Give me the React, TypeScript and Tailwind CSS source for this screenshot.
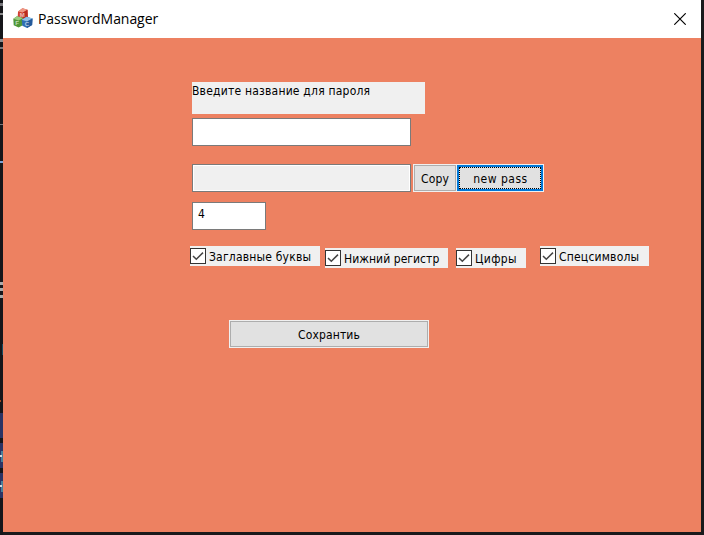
import type { ReactNode } from "react";

const FONT = "font-['DejaVu_Sans_Condensed','DejaVu_Sans',sans-serif] [font-stretch:condensed]";

function AppIcon() {
  return (
    <svg width="20" height="20" viewBox="0 0 20 20" className="mt-[2px] shrink-0">
      <path d="M5 3.500 9.500.3l5 1.400.3 7.300-4.500 2.500L4.700 9.500z" fill="#d2402f" />
      <path d="M5 3.500 9.500.3l5 1.400-4.500 2.900z" fill="#ee9885" />
      <path d="M10 4.600 14.500 1.700l.3 7.300-4.500 2.500z" fill="#b92b20" />
      <path d="M.3 10.800 4 8.300l6 1.700-.3 7.300L5.700 19.500l-5-2.200z" fill="#4e9636" />
      <path d="M.3 10.800 4 8.300l6 1.700-4.300 2.400z" fill="#9acb80" />
      <path d="M8.800 11.800 13.500 8.700l6 1.800-.4 6.500-5 3-4.800-2.200z" fill="#2f6eb2" />
      <path d="M8.800 11.800 13.500 8.700l6 1.800-5.300 2.900z" fill="#8fc0e6" />
      <path d="M14.200 13.400 19.500 10.500l-.4 6.500-5 3z" fill="#245a9b" />
      <g fill="#fff" fontFamily="Liberation Sans, sans-serif" fontWeight="700" opacity=".65">
        <text x="6.800" y="8.700" fontSize="6">M</text>
        <text x="2.200" y="17.300" fontSize="6">F</text>
        <text x="11.800" y="17.800" fontSize="6">C</text>
      </g>
    </svg>
  );
}

function Check({ className, textClass, children }: { className: string; textClass: string; children: ReactNode }) {
  return (
    <label className={`flex h-5 shrink-0 bg-[#f0f0f0] ${className}`}>
      <span className="mt-[2px] flex h-4 w-4 shrink-0 items-center justify-center border border-[#333] bg-white">
        <svg width="14" height="14" viewBox="0 0 14 14" className="shrink-0" fill="none" stroke="#444" strokeWidth="1.500">
          <path d="m2 7 3.300 3.300L12 3.600" />
        </svg>
      </span>
      <span className={`ml-[3px] mt-[3px] whitespace-nowrap leading-4 ${textClass}`}>{children}</span>
    </label>
  );
}

export default function App() {
  return (
    <div className={`flex h-[535px] w-[704px] overflow-hidden bg-[#1a1a1c] text-[12px] text-black ${FONT}`}>
      <div className="flex w-[3px] shrink-0 flex-col bg-[#15161a]">
        <div className="mt-[3px] h-[3px] bg-[#77777c]" />
        <div className="mt-[7px] h-[2px] bg-[#8c8c8e]" />
        <div className="mt-[24px] h-[3px] bg-[#8c8c8e]" />
        <div className="mt-[5px] h-[2px] bg-[#77777c]" />
        <div className="mt-[75px] h-[1px] bg-[#77777c]" />
        <div className="mt-[36px] h-[2px] bg-[#7ba2d5]" />
        <div className="mt-[119px] h-[3px] bg-[#aaaaaa]" />
        <div className="mt-[3px] h-[3px] bg-[#aaaaaa]" />
        <div className="mt-[4px] h-[3px] bg-[#aaaaaa]" />
        <div className="ml-[2px] mt-[46px] h-[11px] bg-[#164b61]" />
        <div className="mt-[45px] h-[2px] w-[1px] bg-[#a04820]" />
        <div className="mt-[11px] h-[25px] bg-[#293464]" />
        <div className="mt-[5px] h-[25px] bg-[#293464] pt-[8px]">
          <div className="ml-[1px] h-[11px] bg-[#47809a] pt-[4px]">
            <div className="-ml-[1px] h-[2px] w-[2px] bg-[#d1d8db]" />
          </div>
        </div>
        <div className="mt-[5px] h-[25px] bg-[#293464] pt-[8px]">
          <div className="ml-[1px] h-[11px] bg-[#47809a] pt-[4px]">
            <div className="-ml-[1px] h-[2px] w-[2px] bg-[#d1d8db]" />
          </div>
        </div>
      </div>
      <div className="flex h-[532px] w-[698px] shrink-0 flex-col bg-[#ed8161]">
        <header className="flex h-[38px] shrink-0 items-center bg-white pl-[10px]">
          <div className="-mt-[4px]"><AppIcon /></div>
          <span className="-mt-[1px] ml-[5px] font-['Open_Sans','Noto_Sans',sans-serif] text-[14px] leading-5 tracking-[-0.06px] [font-stretch:normal]">PasswordManager</span>
          <svg width="12" height="12" viewBox="0 0 12 12" fill="none" stroke="#000" strokeWidth="1.150" className="ml-auto mr-[15px]">
            <path d="m.3.300 11.400 11.400M11.700.300.3 11.700" />
          </svg>
        </header>
        <main className="flex flex-col items-start pl-[189px] pt-[44px]">
          <div className="h-8 w-[233px] bg-[#f0f0f0] pt-px leading-[17px] tracking-[0.21px]">Введите название для пароля</div>
          <div className="mt-1 h-7 w-[219px] border border-[#7a7a7a] bg-white" />
          <div className="mt-[18px] flex">
            <div className="h-7 w-[219px] border border-[#7a7a7a] bg-[#f0f0f0] shadow-[inset_0_0_0_1px_#fff]" />
            <button className="ml-[2px] flex h-7 w-11 border border-[#f0f0f0] bg-[#e1e1e1]">
              <span className="flex h-[26px] w-[42px] items-center justify-center border border-[#adadad] pt-[2px] tracking-[0.1px]">Copy</span>
            </button>
            <button className="flex h-7 w-[87px] border border-l-0 border-[#f0f0f0] bg-[#e1e1e1]">
              <span className="flex h-[26px] w-[86px] border-2 border-[#0078d7]">
                <span className="flex h-[22px] w-[82px] items-center justify-center border border-dotted border-black pt-[2px] pl-px tracking-[0.5px]">new pass</span>
              </span>
            </button>
          </div>
          <div className="mt-[10px] h-7 w-[74px] border border-[#7a7a7a] bg-white pl-[5px] pt-[3px] leading-4">4</div>
          <div className="-ml-[2px] mt-4 flex h-[22px] items-start">
            <Check className="w-[130px]" textClass="tracking-[0.2px]">Заглавные буквы</Check>
            <Check className="ml-[5px] mt-[2px] w-[123px]" textClass="tracking-[0.05px]">Нижний регистр</Check>
            <Check className="ml-2 mt-[2px] w-[70px]" textClass="tracking-[0.4px]">Цифры</Check>
            <Check className="ml-[14px] w-[109px]" textClass="tracking-[0.2px]">Спецсимволы</Check>
          </div>
          <button className="ml-[37px] mt-[52px] flex h-7 w-[200px] border border-[#f0f0f0] bg-[#e1e1e1]">
            <span className="flex h-[26px] w-[198px] items-center justify-center border border-[#adadad] pt-[2px] tracking-[0.15px]">Сохрантиь</span>
          </button>
        </main>
      </div>
    </div>
  );
}
